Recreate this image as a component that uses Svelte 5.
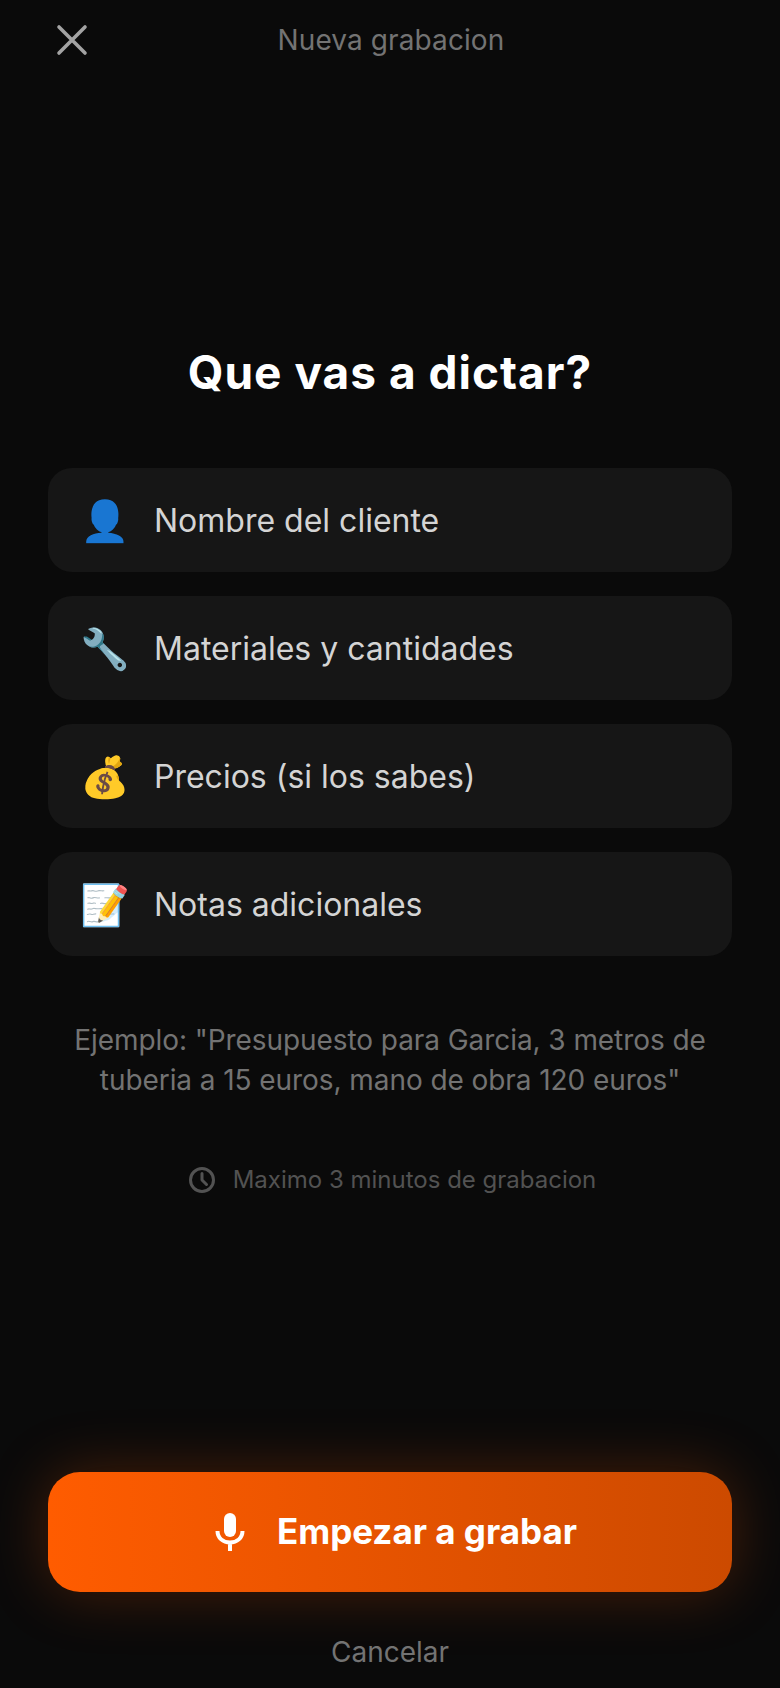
<script>
  const items = [
    { icon: "👤", label: "Nombre del cliente" },
    { icon: "🔧", label: "Materiales y cantidades" },
    { icon: "💰", label: "Precios (si los sabes)" },
    { icon: "📝", label: "Notas adicionales" },
  ];
</script>

<div class="screen">
  <header>
    <button class="close" aria-label="Cerrar">
      <svg viewBox="0 0 32 32" width="32" height="32">
        <path d="M3 3 L29 29 M29 3 L3 29" />
      </svg>
    </button>
    <span class="top-title">Nueva grabacion</span>
  </header>

  <main>
    <h1>Que vas a dictar?</h1>

    <ul>
      {#each items as item}
        <li>
          <span class="emoji">{item.icon}</span>
          <span>{item.label}</span>
        </li>
      {/each}
    </ul>

    <p class="example">Ejemplo: "Presupuesto para Garcia, 3 metros de tuberia a 15 euros, mano de obra 120 euros"</p>

    <p class="limit">
      <svg viewBox="0 0 28 28" width="28" height="28">
        <circle cx="14" cy="14" r="11.5" />
        <path d="M14 7.5 V14 L18.5 18.5" />
      </svg>
      Maximo 3 minutos de grabacion
    </p>
  </main>

  <footer>
    <button class="start">
      <svg viewBox="0 0 30 38" width="30" height="38">
        <rect x="9" y="0" width="12" height="24" rx="6" class="fill" />
        <path d="M2.5 18 C2.5 25 8 29.5 15 29.5 C22 29.5 27.5 25 27.5 18 M15 29.5 V38" />
      </svg>
      <span class="start-label">Empezar a grabar</span>
    </button>
    <button class="cancel">Cancelar</button>
  </footer>
</div>

<style>
  :global(body) {
    background: #0a0a0a;
  }

  .screen {
    height: 1688px;
    display: flex;
    flex-direction: column;
    background: #0a0a0a;
    font-family: Inter, "Liberation Sans", sans-serif;
  }

  header {
    position: relative;
    display: flex;
    justify-content: center;
    align-items: center;
    padding-top: 20px;
    padding-left: 2px;
    height: 40px;
  }

  .close {
    position: absolute;
    left: 56px;
    top: 24px;
    padding: 0;
    background: none;
    border: none;
    line-height: 0;
  }

  .close path {
    fill: none;
    stroke: #a3a3a3;
    stroke-width: 3.6;
    stroke-linecap: round;
  }

  .top-title {
    color: #737373;
    font-size: 28px;
    letter-spacing: 0.1px;
  }

  main {
    padding: 0 48px;
    display: flex;
    flex-direction: column;
    align-items: stretch;
  }

  h1 {
    margin: 280px 0 0;
    color: #fff;
    font-size: 46px;
    line-height: 64px;
    font-weight: 700;
    letter-spacing: 1px;
    text-align: center;
  }

  ul {
    list-style: none;
    margin: 64px 0 0;
    padding: 0;
    display: flex;
    flex-direction: column;
    gap: 24px;
  }

  li {
    height: 104px;
    box-sizing: border-box;
    padding: 0 32px;
    display: flex;
    align-items: center;
    gap: 26px;
    background: #161616;
    border-radius: 24px;
    color: #d4d4d4;
    font-size: 32px;
  }

  .emoji {
    font-size: 40px;
    width: 48px;
    text-align: center;
  }

  .example {
    margin: 64px 0 0;
    text-align: center;
    color: #737373;
    font-size: 28px;
    line-height: 40px;
    letter-spacing: -0.07px;
  }

  .limit {
    margin: 65px 0 0;
    padding-left: 4px;
    display: flex;
    justify-content: center;
    align-items: center;
    gap: 17px;
    color: #525252;
    font-size: 24px;
  }

  .limit svg {
    fill: none;
    stroke: #525252;
    stroke-width: 3;
    stroke-linecap: round;
    stroke-linejoin: round;
  }

  footer {
    margin-top: auto;
    padding: 0 48px 16px;
    display: flex;
    flex-direction: column;
    align-items: stretch;
  }

  .start {
    height: 120px;
    padding: 0 0 0 12px;
    display: flex;
    justify-content: center;
    align-items: center;
    gap: 32px;
    border: none;
    border-radius: 32px;
    background: linear-gradient(90deg, #ff5c00, #cc4a00);
    box-shadow: 0 0 60px rgba(255, 92, 0, 0.25);
    color: #fff;
    font: 700 35px Inter, "Liberation Sans", sans-serif;
  }

  .start-label {
    margin-bottom: 3px;
  }

  .start svg {
    fill: none;
    stroke: #fff;
    stroke-width: 4;
  }

  .start .fill {
    fill: #fff;
    stroke: none;
  }

  .cancel {
    margin-top: 40px;
    padding: 0;
    height: 40px;
    background: none;
    border: none;
    color: #737373;
    font: 28px Inter, "Liberation Sans", sans-serif;
  }
</style>
